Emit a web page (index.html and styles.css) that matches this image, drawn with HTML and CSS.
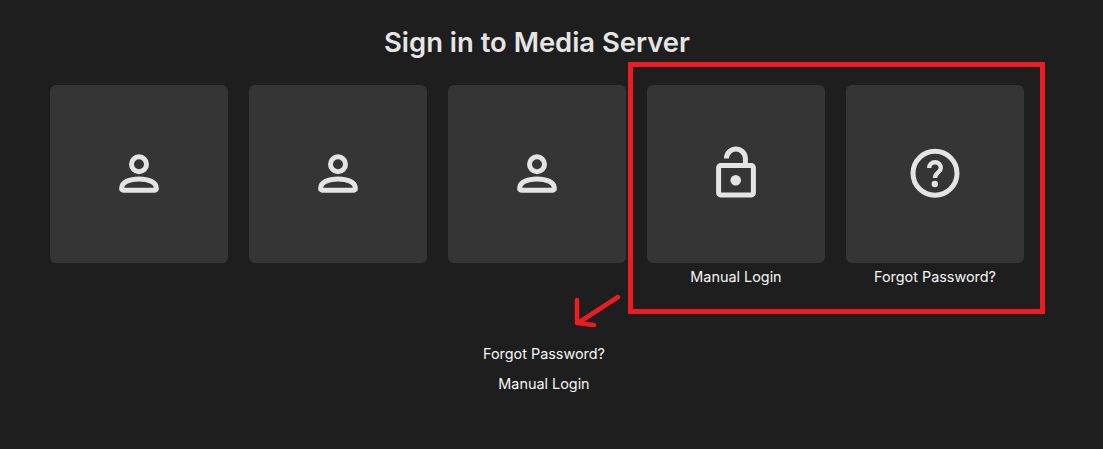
FILE: index.html
```html
<!DOCTYPE html>
<html lang="en">
<head>
  <meta charset="UTF-8">
  <meta name="viewport" content="width=device-width, initial-scale=1.0">
  <title>Sign in to Media Server</title>
  <link rel="stylesheet" href="styles.css">
</head>
<body>

  <main class="page">
    <h1 class="title">Sign in to Media Server</h1>

    <div class="cards">
      <a class="card-item">
        <div class="card">
          <svg class="icon" viewBox="0 0 60 60"><use href="#person"/></svg>
        </div>
      </a>
      <a class="card-item">
        <div class="card">
          <svg class="icon" viewBox="0 0 60 60"><use href="#person"/></svg>
        </div>
      </a>
      <a class="card-item">
        <div class="card">
          <svg class="icon" viewBox="0 0 60 60"><use href="#person"/></svg>
        </div>
      </a>
      <a class="card-item">
        <div class="card">
          <svg class="icon" viewBox="0 0 60 60">
            <rect x="12.6" y="21.6" width="34.8" height="29.3" rx="2"/>
            <path d="M20.4 14.6a9.5 9.5 0 0 1 19 0v7"/>
            <circle class="solid" cx="29.7" cy="36.3" r="5.3"/>
          </svg>
        </div>
        <span class="card-label">Manual Login</span>
      </a>
      <a class="card-item">
        <div class="card">
          <svg class="icon" viewBox="0 0 60 60">
            <circle cx="30" cy="29.2" r="22"/>
            <path class="thin" d="M24.2 24a5.8 5.8 0 0 1 11.6 0c0 4.5-5.8 4.5-5.8 10"/>
            <circle class="solid" cx="29.8" cy="40" r="3.2"/>
          </svg>
        </div>
        <span class="card-label">Forgot Password?</span>
      </a>
    </div>

    <div class="links">
      <a class="link">Forgot Password?</a>
      <a class="link">Manual Login</a>
    </div>
  </main>

  <!-- annotation drawn over the screenshot -->
  <div class="mark-box"></div>
  <svg class="mark-arrow" viewBox="0 0 50 35">
    <path d="M45 5L5 31M4 8L4 31L21 33"/>
  </svg>

  <svg class="defs" width="0" height="0">
    <symbol id="person" viewBox="0 0 60 60">
      <circle cx="30" cy="20.3" r="7.5"/>
      <path d="M14 46.2h32a1.8 1.8 0 0 0 1.3-2c0-6-7.8-9.2-17.3-9.2s-17.3 3.2-17.3 9.2a1.8 1.8 0 0 0 1.3 2z"/>
    </symbol>
  </svg>

</body>
</html>
```

FILE: styles.css
```css
html, body { height: 100%; }
body {
  margin: 0;
  background: #1e1e1e;
  color: #e5e5e5;
  font-family: Inter, "Liberation Sans", sans-serif;
  overflow: hidden;
}
.page { padding: 25px 0 0 50px; }
.title {
  width: 974px;
  margin: 0;
  font-size: 27.4px;
  line-height: 34px;
  font-weight: 600;
  text-align: center;
}
.cards {
  display: flex;
  gap: 21px;
  margin-top: 26px;
}
.card-item {
  display: block;
  width: 178px;
  text-align: center;
}
.card {
  display: flex;
  align-items: center;
  justify-content: center;
  height: 178px;
  background: #353535;
  border-radius: 6px;
}
.card-label {
  display: block;
  margin-top: 5px;
  font-size: 14.4px;
  line-height: 18px;
  color: #f5f5f5;
}
.icon {
  width: 60px;
  height: 60px;
  fill: none;
  stroke: #e4e4e4;
  stroke-width: 5;
}
.icon .solid { fill: #e4e4e4; stroke: none; }
.icon .thin { stroke-width: 4.4; }
.defs { position: absolute; }
.links {
  width: 988px;
  margin-top: 59px;
  display: flex;
  flex-direction: column;
  align-items: center;
  gap: 12px;
}
.link {
  font-size: 14.4px;
  line-height: 18px;
  color: #f5f5f5;
}
.mark-box {
  position: absolute;
  left: 628px;
  top: 62px;
  width: 417px;
  height: 252px;
  box-sizing: border-box;
  border: 5px solid #ed1c24;
}
.mark-arrow {
  position: absolute;
  left: 573px;
  top: 292px;
  width: 50px;
  height: 35px;
  fill: none;
  stroke: #ed1c24;
  stroke-width: 4.5;
  stroke-linecap: round;
  stroke-linejoin: round;
}
```
